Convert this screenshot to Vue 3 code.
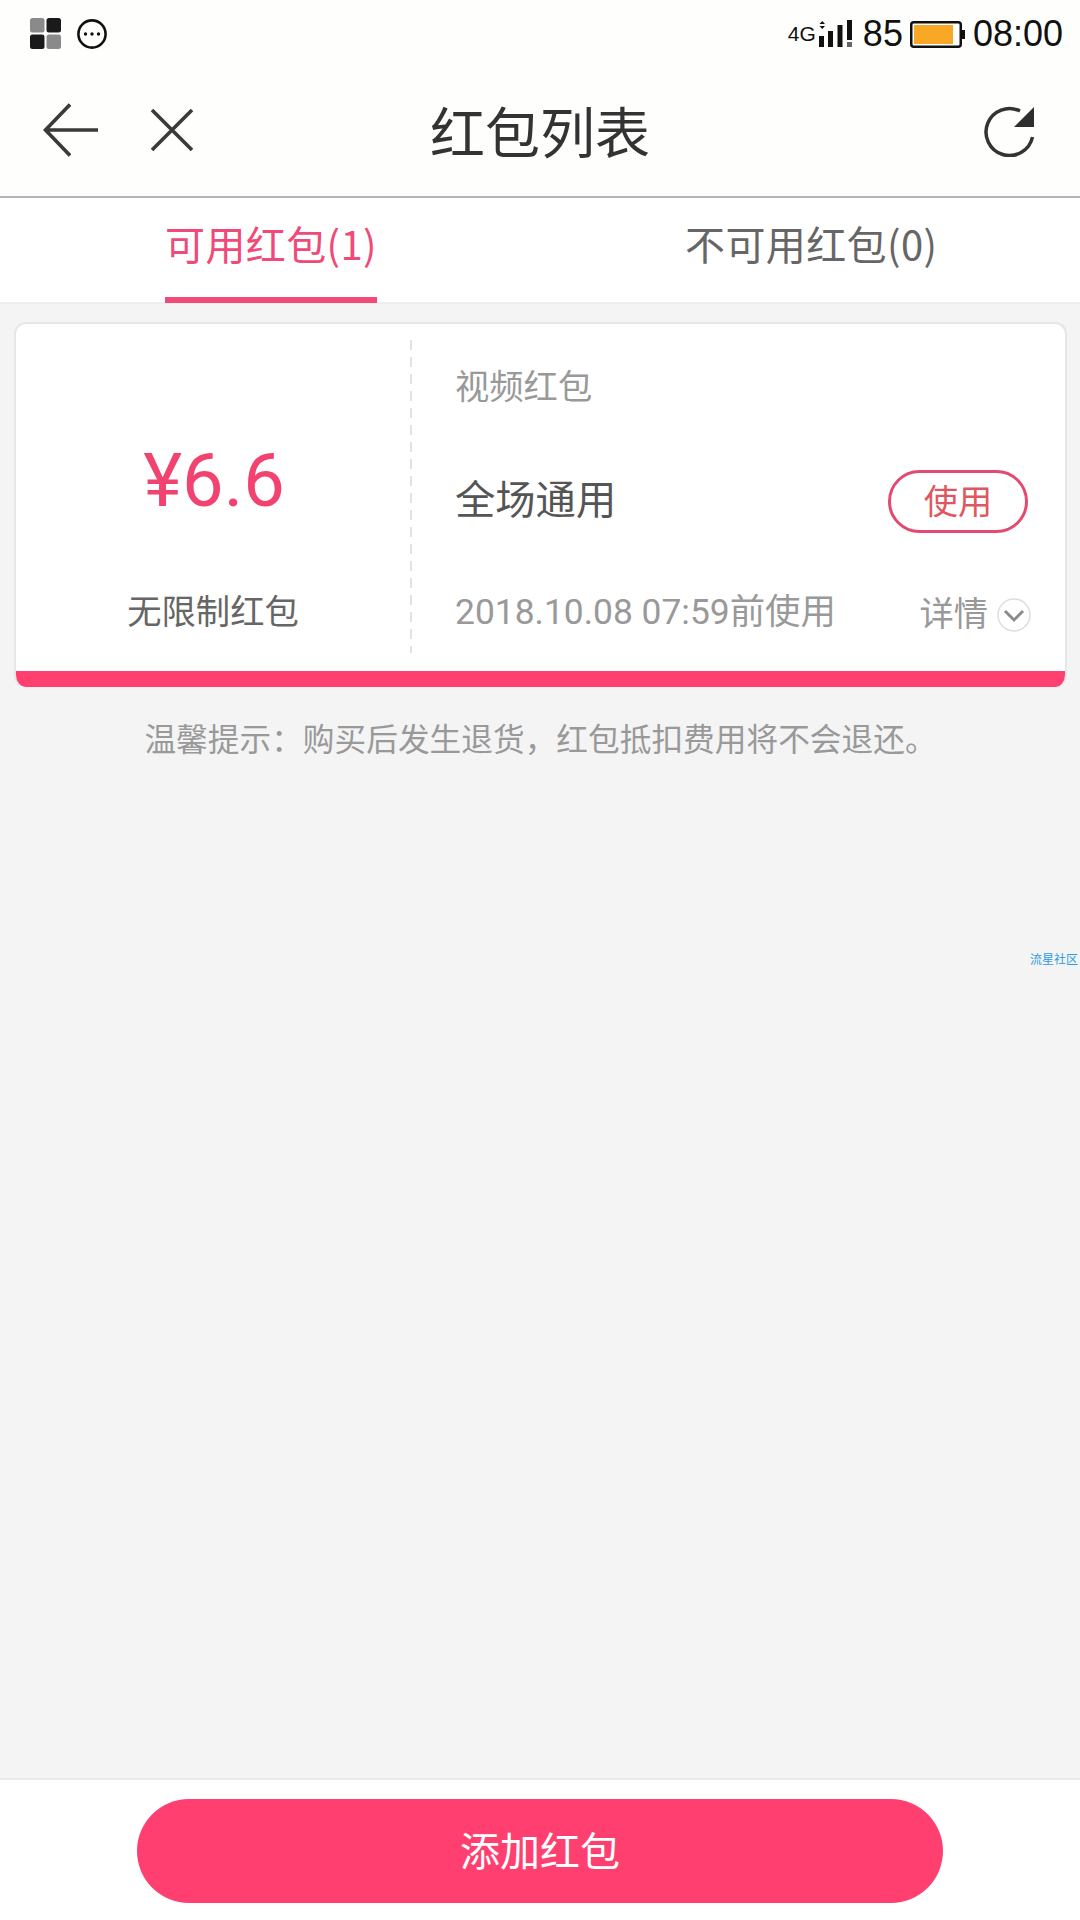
<script setup>
const tipText = '温馨提示：购买后发生退货，红包抵扣费用将不会退还。'
</script>

<template>
  <div class="page">
    <div class="status">
      <div class="status-left">
        <svg width="32" height="32" viewBox="0 0 32 32"><rect x="0" y="0" width="14.5" height="14.5" rx="2.5" fill="#8a8a8a"/><rect x="16.5" y="0" width="14.5" height="14.5" rx="2.5" fill="#1a1a1a"/><rect x="0" y="16.5" width="14.5" height="14.5" rx="2.5" fill="#1a1a1a"/><rect x="16.5" y="16.5" width="14.5" height="14.5" rx="2.5" fill="#8a8a8a"/></svg>
        <svg width="32" height="32" viewBox="0 0 32 32"><circle cx="16" cy="16" r="13.6" fill="none" stroke="#111" stroke-width="2.6"/><circle cx="9.5" cy="16" r="1.7" fill="#111"/><circle cx="16" cy="16" r="1.7" fill="#111"/><circle cx="22.5" cy="16" r="1.7" fill="#111"/></svg>
      </div>
      <div class="status-right">
        <span class="net">4G</span>
        <svg class="signal" width="34" height="28" viewBox="0 0 34 28"><path d="M0.5 4l2.75-3 2.75 3zM0.5 6h5.5l-2.75 3z" fill="#111"/><rect x="0" y="16" width="5" height="11" fill="#111"/><rect x="9" y="11" width="5" height="16" fill="#111"/><rect x="18.500" y="5" width="5" height="22" fill="#111"/><rect x="28" y="0" width="5" height="20" fill="#111"/><rect x="28" y="22" width="5" height="5" fill="#666"/></svg>
        <span class="batt-num">85</span>
        <svg class="battery" width="55" height="27" viewBox="0 0 55 27"><rect x="1.250" y="1.250" width="49.500" height="24.500" rx="2.500" fill="#fff" stroke="#111" stroke-width="2.500"/><rect x="4" y="4" width="39" height="19" fill="#f9a825"/><rect x="52" y="9" width="3" height="9" fill="#111"/></svg>
        <span class="clock">08:00</span>
      </div>
    </div>

    <header class="nav">
      <div class="nav-left">
        <svg width="56" height="54" viewBox="0 0 56 54"><path d="M27 1.500L2.500 27 27 52.500M2.500 27H55" fill="none" stroke="#3a3a3a" stroke-width="3.600"/></svg>
        <svg width="46" height="46" viewBox="0 0 46 46"><path d="M3 3l40 40M43 3L3 43" fill="none" stroke="#3a3a3a" stroke-width="3.600"/></svg>
      </div>
      <h1 class="title">红包列表</h1>
      <svg class="refresh" width="54" height="54" viewBox="0 0 54 54"><path d="M50.500 34A23.500 23.500 0 1 1 38 8" fill="none" stroke="#333" stroke-width="3.500"/><path d="M52 4v20H32z" fill="#2e2e2e"/></svg>
    </header>

    <nav class="tabs">
      <div class="tab-cell"><span class="tab active">可用红包(1)</span></div>
      <div class="tab-cell"><span class="tab">不可用红包(0)</span></div>
    </nav>

    <main class="content">
      <section class="card">
        <div class="card-body">
          <div class="amount-col">
            <div class="amount">¥6.6</div>
            <div class="limit">无限制红包</div>
          </div>
          <div class="info-col">
            <div class="kind">视频红包</div>
            <div class="scope-row">
              <span class="scope">全场通用</span>
              <span class="use">使用</span>
            </div>
            <div class="date-row">
              <span>2018.10.08 07:59前使用</span>
              <span class="detail">详情
                <svg class="chevron" width="34" height="36" viewBox="0 0 34 36"><circle cx="17" cy="18" r="16" fill="#fff" stroke="#ddd" stroke-width="1.500"/><path d="M8 14l9 9 9-9" fill="none" stroke="#8c8c8c" stroke-width="3"/></svg>
              </span>
            </div>
          </div>
        </div>
        <div class="card-bar"></div>
      </section>
      <p class="tip">{{ tipText }}</p>
      <span class="watermark">流星社区</span>
    </main>

    <footer class="footer">
      <button class="add">添加红包</button>
    </footer>
  </div>
</template>

<style>
html, body { margin: 0; padding: 0; background: #f4f4f5; }
</style>

<style scoped>
.page {
  width: 1080px;
  height: 1920px;
  display: flex;
  flex-direction: column;
  background: #f4f4f5;
  font-family: "Noto Sans CJK SC", "Roboto", sans-serif;
  overflow: hidden;
}
.status {
  height: 70px;
  flex: none;
  box-sizing: border-box;
  padding: 18px 17px 0 30px;
  display: flex;
  justify-content: space-between;
  align-items: flex-start;
  background: #fefefd;
}
.status-left { display: flex; gap: 14px; }
.status-right { display: flex; align-items: center; height: 32px; color: #111; font-family: "Liberation Sans", sans-serif; font-size: 36px; }
.net { font-size: 21px; margin-right: 3px; }
.signal { margin-right: 10px; }
.batt-num { margin-right: 7px; }
.battery { margin-right: 8px; }
.nav {
  height: 128px;
  flex: none;
  box-sizing: border-box;
  border-bottom: 2px solid #b5b5b5;
  background: #fefefd;
  display: flex;
  align-items: center;
  padding: 0 44px 6px 43px;
  position: relative;
}
.nav-left { display: flex; align-items: center; gap: 50px; }
.title {
  position: absolute;
  left: 0;
  right: 0;
  top: 24px;
  margin: 0;
  text-align: center;
  font-size: 55px;
  line-height: 70px;
  font-weight: 400;
  color: #333;
}
.refresh { margin-left: auto; }
.tabs {
  height: 106px;
  flex: none;
  box-sizing: border-box;
  display: flex;
  background: #fff;
  border-bottom: 2px solid #eee;
}
.tab-cell { flex: none; width: 540px; display: flex; justify-content: flex-start; box-sizing: border-box; }
.tab-cell:first-child { padding-left: 165px; }
.tab-cell:last-child { padding-left: 145px; }
.tab {
  height: 105px;
  box-sizing: border-box;
  padding-top: 15px;
  font-size: 40px;
  line-height: 60px;
  letter-spacing: 0.4px;
  color: #666;
  white-space: nowrap;
}
.tab.active {
  color: #ef4a78;
  width: 212px;
  border-bottom: 6px solid #ef4a78;
}
.content {
  flex: 1;
  position: relative;
  padding: 18px 13px 0 14px;
  min-height: 0;
}
.card {
  height: 365px;
  box-sizing: border-box;
  background: #fff;
  border: 2.500px solid #e6e6e6;
  border-bottom: 0;
  border-radius: 12px;
  display: flex;
  flex-direction: column;
  overflow: hidden;
}
.card-body { flex: 1; display: flex; padding: 16px 0 18px; min-height: 0; }
.card-bar { height: 16px; flex: none; background: #ff3f70; margin: 0 -2.500px; border-radius: 0 0 12px 12px; }
.amount-col {
  width: 396px;
  box-sizing: border-box;
  background: linear-gradient(#e2e2e2 60%, transparent 0) right top / 2px 17px repeat-y;
  text-align: center;
  display: flex;
  flex-direction: column;
  align-items: center;
}
.amount {
  margin-top: 93px;
  font-family: "Roboto", sans-serif;
  font-size: 74px;
  line-height: 96px;
  color: #f2426f;
}
.limit {
  margin-top: 55px;
  padding-right: 2px;
  font-size: 34.300px;
  line-height: 50px;
  color: #666;
}
.info-col {
  flex: 1;
  min-width: 0;
  padding: 0 37px 0 43px;
  color: #999;
  font-size: 34.300px;
  display: flex;
  flex-direction: column;
}
.kind { line-height: 50px; margin-top: 19px; }
.scope-row {
  display: flex;
  justify-content: space-between;
  align-items: center;
  margin-top: 61px;
  height: 63px;
}
.scope { font-size: 40.300px; color: #555; margin-bottom: 11px; }
.use {
  width: 140px;
  height: 63px;
  box-sizing: border-box;
  border: 3px solid #e4496f;
  border-radius: 32px;
  text-align: center;
  line-height: 53px;
  color: #e0585f;
}
.date-row {
  display: flex;
  justify-content: space-between;
  align-items: center;
  margin-top: 54px;
  font-family: "Roboto", "Noto Sans CJK SC", sans-serif;
  font-size: 35.400px;
  line-height: 50px;
  white-space: nowrap;
}
.detail {
  display: flex;
  align-items: center;
  gap: 8px;
  font-size: 34.300px;
  font-family: "Noto Sans CJK SC", sans-serif;
  margin-right: -3px;
  margin-top: -2px;
}
.chevron { margin: 8px 0 0 1px; }
.tip {
  margin: 25px 0 0;
  font-size: 31.700px;
  line-height: 50px;
  color: #999;
  text-align: center;
}
.watermark {
  position: absolute;
  right: 2px;
  top: 647px;
  font-size: 12px;
  line-height: 16px;
  color: #2f9be0;
}
.footer {
  height: 142px;
  flex: none;
  box-sizing: border-box;
  border-top: 2px solid #ebebeb;
  background: #fff;
  display: flex;
  justify-content: center;
  padding-top: 19px;
}
.add {
  width: 806px;
  height: 104px;
  border: 0;
  border-radius: 52px;
  background: #ff3f70;
  color: #fff;
  font-family: inherit;
  font-size: 40px;
  padding: 0 0 4px;
}
</style>
